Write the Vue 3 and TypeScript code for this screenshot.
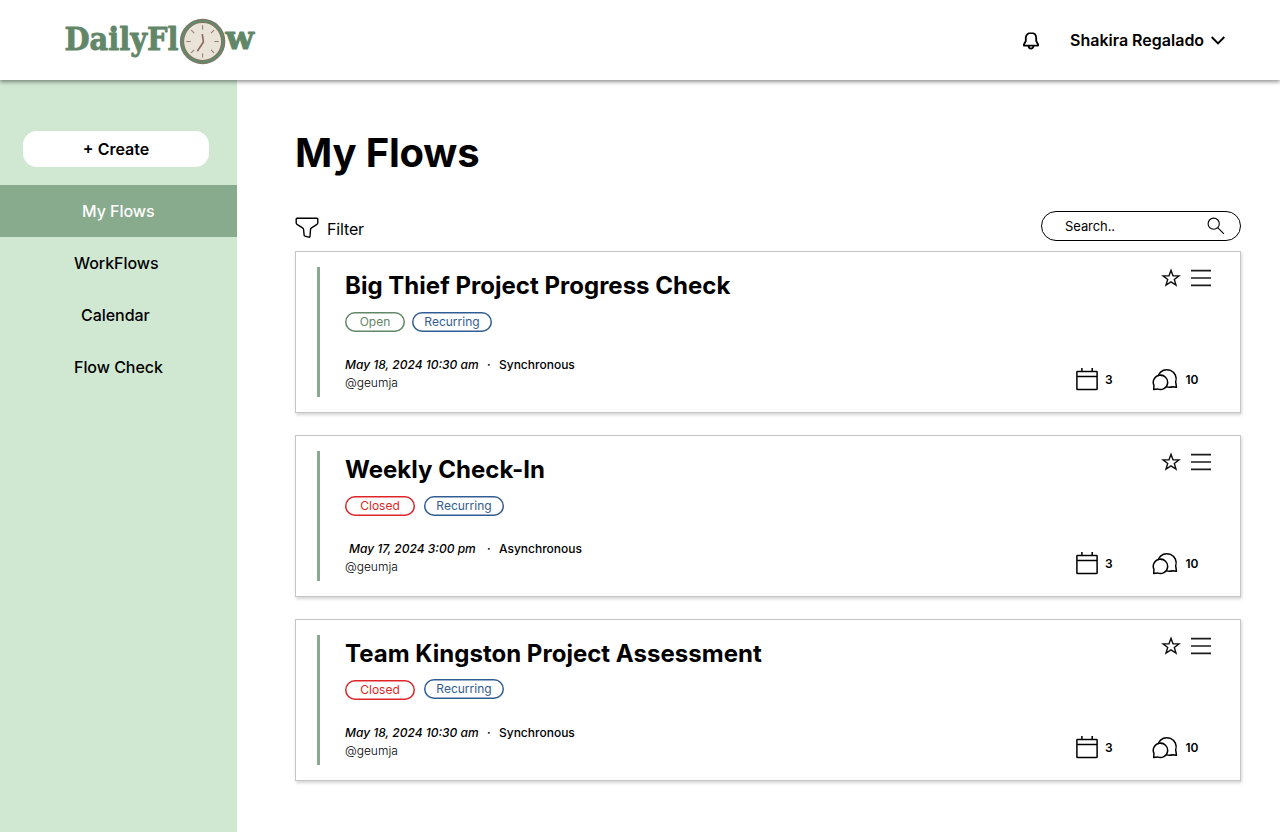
<script setup lang="ts">
interface Flow {
  title: string
  status: 'Open' | 'Closed'
  date: string
  mode: string
  owner: string
  events: number
  comments: number
  indented?: boolean
  raised?: boolean
}

const navItems: { label: string; key: string; active?: boolean }[] = [
  { label: 'My Flows', key: 'my', active: true },
  { label: 'WorkFlows', key: 'work' },
  { label: 'Calendar', key: 'calendar' },
  { label: 'Flow Check', key: 'check' },
]

const flows: Flow[] = [
  { title: 'Big Thief Project Progress Check', status: 'Open', date: 'May 18, 2024 10:30 am', mode: 'Synchronous', owner: '@geumja', events: 3, comments: 10 },
  { title: 'Weekly Check-In', status: 'Closed', date: 'May 17, 2024 3:00 pm', mode: 'Asynchronous', owner: '@geumja', events: 3, comments: 10, indented: true },
  { title: 'Team Kingston Project Assessment', status: 'Closed', date: 'May 18, 2024 10:30 am', mode: 'Synchronous', owner: '@geumja', events: 3, comments: 10, raised: true },
]

const ticks = [0, 45, 90, 135, 180, 225, 270, 315]
</script>

<template>
  <div class="page">
    <header class="header">
      <svg class="logo" width="200" height="60" viewBox="60 10 200 60">
        <g class="wordmark">
          <text x="64.500" y="50.300" textLength="114" lengthAdjust="spacingAndGlyphs">DailyFl</text>
          <text x="225.500" y="48.800" textLength="28.500" lengthAdjust="spacingAndGlyphs">w</text>
        </g>
        <circle cx="202.600" cy="41.500" r="20.600" fill="#e9e4d7" stroke="#8f6c60" stroke-width="4.300" />
        <circle cx="202.600" cy="41.500" r="20.600" fill="none" stroke="#64896a" stroke-width="2.900" />
        <g stroke="#94786d" stroke-width="1">
          <line v-for="a in ticks" :key="a" x1="202.600" y1="25.300" x2="202.600" y2="29.600" :transform="`rotate(${a} 202.6 41.5)`" />
        </g>
        <path d="M202.300 34L203.400 42L197.300 51.300" fill="none" stroke="#8f6c60" stroke-width="1.700" stroke-linejoin="round" />
      </svg>
      <div class="account">
        <svg class="bell" width="18" height="20" viewBox="0 0 18 20" fill="none" stroke="#000" stroke-width="1.800" stroke-linejoin="round">
          <path d="M9 1.900C5.800 1.900 3.800 4 3.800 7V10L1.900 13.500V14.600H16.100V13.500L14.200 10V7C14.200 4 12.200 1.900 9 1.900Z" />
          <path d="M6.600 15C6.600 18.400 11.400 18.400 11.400 15" />
        </svg>
        <span class="name">Shakira Regalado</span>
        <svg class="chevron" width="14" height="9" viewBox="0 0 14 9" fill="none" stroke="#000" stroke-width="1.900">
          <path d="M0.700 1L7 7.300L13.300 1" />
        </svg>
      </div>
    </header>

    <div class="columns">
      <aside class="sidebar">
        <button class="create">+ Create</button>
        <nav>
          <a v-for="n in navItems" :key="n.key" class="nav" :class="[n.key, { active: n.active }]">{{ n.label }}</a>
        </nav>
      </aside>

      <main class="main">
        <h1>My Flows</h1>
        <div class="toolbar">
          <div class="filter">
            <svg width="24" height="22" viewBox="0 0 24 22" fill="none" stroke="#000" stroke-width="1.400" stroke-linejoin="round">
              <path d="M2 1.200H22C22.500 1.200 22.800 1.500 22.800 2V5.700C22.800 6.400 22.500 6.900 22 7.300L16.500 10.800C15.700 11.300 15.500 11.900 15.500 12.700L15 19.300C15 20 14.300 20.400 13.700 20.200L10.100 19.100C9.500 18.900 9.100 18.500 9.100 17.900L8.600 12.700C8.500 11.900 8.200 11.300 7.500 10.900L2 7.300C1.500 6.900 1.200 6.400 1.200 5.700V2C1.200 1.500 1.500 1.200 2 1.200Z" />
            </svg>
            <span>Filter</span>
          </div>
          <div class="search">
            <span>Search..</span>
            <svg width="18" height="18" viewBox="0 0 18 18" fill="none" stroke="#000" stroke-width="1.100">
              <circle cx="6.700" cy="6.700" r="5.600" />
              <path d="M10.700 10.700L16.900 16.900" />
            </svg>
          </div>
        </div>

        <section class="cards">
          <article v-for="f in flows" :key="f.title" class="card">
            <div class="stripe"></div>
            <div class="body">
              <h2>{{ f.title }}</h2>
              <div class="badges">
                <span class="badge" :class="f.status.toLowerCase()">{{ f.status }}</span>
                <span class="badge recurring" :class="{ raised: f.raised }">Recurring</span>
              </div>
              <div class="meta">
                <span class="date" :class="{ indented: f.indented }">{{ f.date }}</span>
                <span class="dot">·</span>
                <span>{{ f.mode }}</span>
              </div>
              <div class="owner">{{ f.owner }}</div>
            </div>
            <div class="side">
              <div class="actions">
                <svg width="20" height="20" viewBox="0 0 20 20" fill="none" stroke="#111" stroke-width="1.400">
                  <path d="M10 2.300L12 7.700L18 7.900L13.300 11.400L15 17.100L10 13.800L5 17.100L6.700 11.400L2 7.900L8 7.700Z" />
                </svg>
                <svg width="20" height="18" viewBox="0 0 20 18" stroke="#1c1c1c" stroke-width="1.600">
                  <path d="M0 1.600H20M0 9H20M0 16.400H20" />
                </svg>
              </div>
              <div class="counts">
                <svg width="22" height="24" viewBox="0 0 22 24" fill="none" stroke="#000" stroke-width="1.500" stroke-linejoin="round">
                  <rect x="0.900" y="4.500" width="20.200" height="18" rx="0.600" />
                  <path d="M0.900 9.500H21.100M5.900 1V4.500M16.200 1V4.500" />
                </svg>
                <span class="events">{{ f.events }}</span>
                <svg width="26" height="24" viewBox="0 0 26 24" fill="none" stroke="#000" stroke-width="1.500" stroke-linejoin="round">
                  <path d="M1.700 22.500L1.900 18.300A7.200 7.200 0 1 1 5.500 21.900Z" />
                  <path d="M6.500 8A9.300 9.300 0 0 1 23.700 15L24.500 20.300L20.500 19.700C18.300 20.500 16.300 20.400 13.800 19.600" />
                </svg>
                <span class="comments">{{ f.comments }}</span>
              </div>
            </div>
          </article>
        </section>
      </main>
    </div>
  </div>
</template>

<style>
body {
  margin: 0;
  background: #fff;
}
</style>

<style scoped>
.page {
  width: 1280px;
  height: 832px;
  display: flex;
  flex-direction: column;
  overflow: hidden;
  background: #fff;
  color: #000;
  font-family: Inter, "Liberation Sans", sans-serif;
}
.header {
  position: relative;
  z-index: 1;
  box-sizing: border-box;
  flex: none;
  height: 80px;
  padding: 0 55px 0 60px;
  display: flex;
  align-items: center;
  justify-content: space-between;
  background: #fff;
  box-shadow: 0 2px 4px rgba(0, 0, 0, 0.42);
}
.wordmark {
  font: 700 32px "DejaVu Serif", serif;
  fill: #628768;
  stroke: #628768;
  stroke-width: 0.900px;
  stroke-linejoin: round;
}
.account {
  display: flex;
  align-items: center;
}
.bell {
  margin-top: 2px;
}
.name {
  margin: 0 7px 0 30px;
  width: 134px;
  font-size: 16px;
  font-weight: 600;
  white-space: nowrap;
}
.columns {
  flex: 1;
  display: flex;
}
.sidebar {
  width: 237px;
  flex: none;
  background: #d0e8d2;
}
.create {
  display: block;
  margin: 51px 0 18px 23px;
  width: 186px;
  height: 36px;
  padding: 0;
  border: 0;
  border-radius: 14px;
  background: #fff;
  color: #000;
  font: 600 16px Inter, sans-serif;
}
.nav {
  box-sizing: border-box;
  height: 52px;
  padding-left: 74px;
  display: flex;
  align-items: center;
  font-size: 16px;
  font-weight: 500;
  letter-spacing: -0.050px;
}
.nav.my {
  padding-left: 82px;
}
.nav.calendar {
  padding-left: 81px;
}
.nav.active {
  background: #88ab8e;
  color: #fff;
}
.main {
  flex: 1;
  padding: 49px 39px 0 58px;
}
h1 {
  margin: 0;
  font-size: 40px;
  line-height: 48px;
  font-weight: 700;
  letter-spacing: -0.200px;
}
.toolbar {
  height: 30px;
  margin: 34px 0 10px;
  display: flex;
  justify-content: space-between;
}
.filter {
  display: flex;
  align-items: center;
  gap: 8px;
  padding-top: 4px;
  font-size: 16px;
  letter-spacing: -0.150px;
}
.filter span {
  padding-top: 2px;
}
.search {
  box-sizing: border-box;
  width: 200px;
  height: 30px;
  padding: 0 15px 0 23px;
  display: flex;
  align-items: center;
  justify-content: space-between;
  border: 1px solid #000;
  border-radius: 15px;
  font-size: 13px;
  letter-spacing: -0.080px;
}
.cards {
  display: flex;
  flex-direction: column;
  gap: 22px;
}
.card {
  box-sizing: border-box;
  height: 162px;
  padding: 15px 29px 15px 21px;
  display: flex;
  border: 1px solid #c9c5c6;
  background: #fff;
  box-shadow: 1px 2px 3px rgba(0, 0, 0, 0.17);
}
.stripe {
  width: 3px;
  background: #88ab8e;
}
.body {
  flex: 1;
  padding-left: 25px;
}
h2 {
  margin: 0;
  padding-top: 1px;
  font-size: 24px;
  line-height: 36px;
  font-weight: 700;
  letter-spacing: 0.020px;
}
.badges {
  display: flex;
  margin-top: 8px;
}
.badge {
  box-sizing: border-box;
  height: 20px;
  border-radius: 10px;
  box-shadow: inset 0 0 0 1.500px currentColor;
  font-size: 12px;
  line-height: 20px;
  text-align: center;
}
.badge.open {
  width: 60px;
  margin-right: 7px;
  color: #628768;
}
.badge.closed {
  width: 70px;
  margin-right: 9px;
  color: #df2626;
}
.badge.recurring {
  width: 80px;
  color: #315d93;
}
.badge.raised {
  margin-top: -1px;
  margin-bottom: 1px;
}
.meta {
  display: flex;
  margin-top: 24px;
  font-size: 12px;
  line-height: 18px;
  font-weight: 500;
}
.date {
  box-sizing: border-box;
  width: 142px;
  font-style: italic;
}
.date.indented {
  padding-left: 4px;
}
.dot {
  width: 12px;
}
.owner {
  font-size: 12px;
  line-height: 18px;
  font-weight: 300;
}
.side {
  display: flex;
  flex-direction: column;
  justify-content: space-between;
}
.actions {
  display: flex;
  justify-content: flex-end;
  align-items: center;
  gap: 10px;
  padding-top: 1px;
}
.counts {
  display: flex;
  align-items: center;
  gap: 7px;
  width: 135px;
  padding-bottom: 6px;
  font-size: 12px;
  font-weight: 600;
}
.events {
  width: 40px;
}
.comments {
  padding-left: 0.500px;
}
</style>
